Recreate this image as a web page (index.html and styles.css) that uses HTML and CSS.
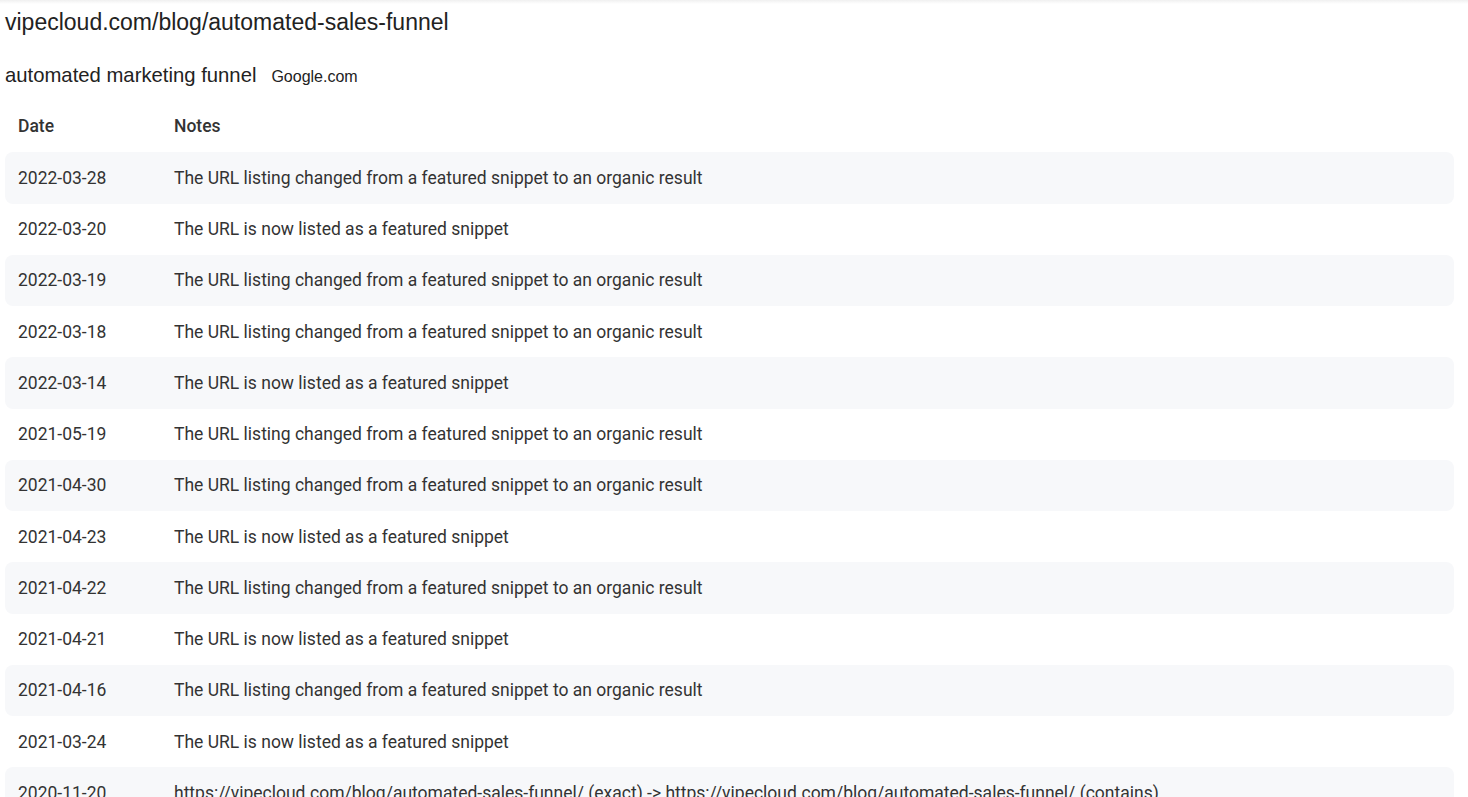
FILE: index.html
```html
<!DOCTYPE html>
<html>
<head>
<meta charset="utf-8">
<link rel="stylesheet" href="styles.css">
</head>
<body>
<div class="topshadow"></div>
<div class="page">
  <h1 class="url">vipecloud.com/blog/automated-sales-funnel</h1>
  <div class="kw"><span class="kw-name">automated marketing funnel</span><span class="kw-engine">Google.com</span></div>
  <div class="table">
    <div class="row head"><div class="c-date">Date</div><div class="c-notes">Notes</div></div>
    <div class="row alt"><div class="c-date">2022-03-28</div><div class="c-notes">The URL listing changed from a featured snippet to an organic result</div></div>
    <div class="row"><div class="c-date">2022-03-20</div><div class="c-notes">The URL is now listed as a featured snippet</div></div>
    <div class="row alt"><div class="c-date">2022-03-19</div><div class="c-notes">The URL listing changed from a featured snippet to an organic result</div></div>
    <div class="row"><div class="c-date">2022-03-18</div><div class="c-notes">The URL listing changed from a featured snippet to an organic result</div></div>
    <div class="row alt"><div class="c-date">2022-03-14</div><div class="c-notes">The URL is now listed as a featured snippet</div></div>
    <div class="row"><div class="c-date">2021-05-19</div><div class="c-notes">The URL listing changed from a featured snippet to an organic result</div></div>
    <div class="row alt"><div class="c-date">2021-04-30</div><div class="c-notes">The URL listing changed from a featured snippet to an organic result</div></div>
    <div class="row"><div class="c-date">2021-04-23</div><div class="c-notes">The URL is now listed as a featured snippet</div></div>
    <div class="row alt"><div class="c-date">2021-04-22</div><div class="c-notes">The URL listing changed from a featured snippet to an organic result</div></div>
    <div class="row"><div class="c-date">2021-04-21</div><div class="c-notes">The URL is now listed as a featured snippet</div></div>
    <div class="row alt"><div class="c-date">2021-04-16</div><div class="c-notes">The URL listing changed from a featured snippet to an organic result</div></div>
    <div class="row"><div class="c-date">2021-03-24</div><div class="c-notes">The URL is now listed as a featured snippet</div></div>
    <div class="row alt"><div class="c-date">2020-11-20</div><div class="c-notes">https://vipecloud.com/blog/automated-sales-funnel/ (exact) -&gt; https://vipecloud.com/blog/automated-sales-funnel/ (contains)</div></div>
  </div>
</div>
</body>
</html>
```

FILE: styles.css
```css
html, body {
  margin: 0;
  padding: 0;
  background: #ffffff;
  overflow: hidden;
}
.topshadow {
  height: 4px;
  background: linear-gradient(#f0f0f0, #ffffff);
}
.page {
  padding: 0 14px 0 5px;
  color: #333333;
}
.url {
  margin: 4px 0 0 0;
  font-family: "Liberation Sans", Arial, sans-serif;
  font-size: 23px;
  font-weight: normal;
  line-height: 28px;
  color: #222222;
}
.kw {
  margin-top: 27px;
  display: flex;
  align-items: baseline;
  gap: 15px;
  font-family: "Liberation Sans", Arial, sans-serif;
  color: #222222;
}
.kw-name {
  font-size: 20.3px;
  line-height: 24px;
}
.kw-engine {
  font-size: 16px;
}
.table {
  margin-top: 14px;
  font-family: Roboto, "Noto Sans", sans-serif;
  font-size: 17.5px;
}
.row {
  display: flex;
  align-items: center;
  height: 51.25px;
  border-radius: 8px;
}
.row.alt {
  background: #f7f8fa;
}
.row.head {
  font-weight: 500;
  color: #333333;
  padding-bottom: 2px;
  height: 49.25px;
}
.c-date {
  width: 156px;
  padding-left: 13px;
  flex: none;
}
.c-notes {
  flex: 1;
  white-space: nowrap;
}
```
